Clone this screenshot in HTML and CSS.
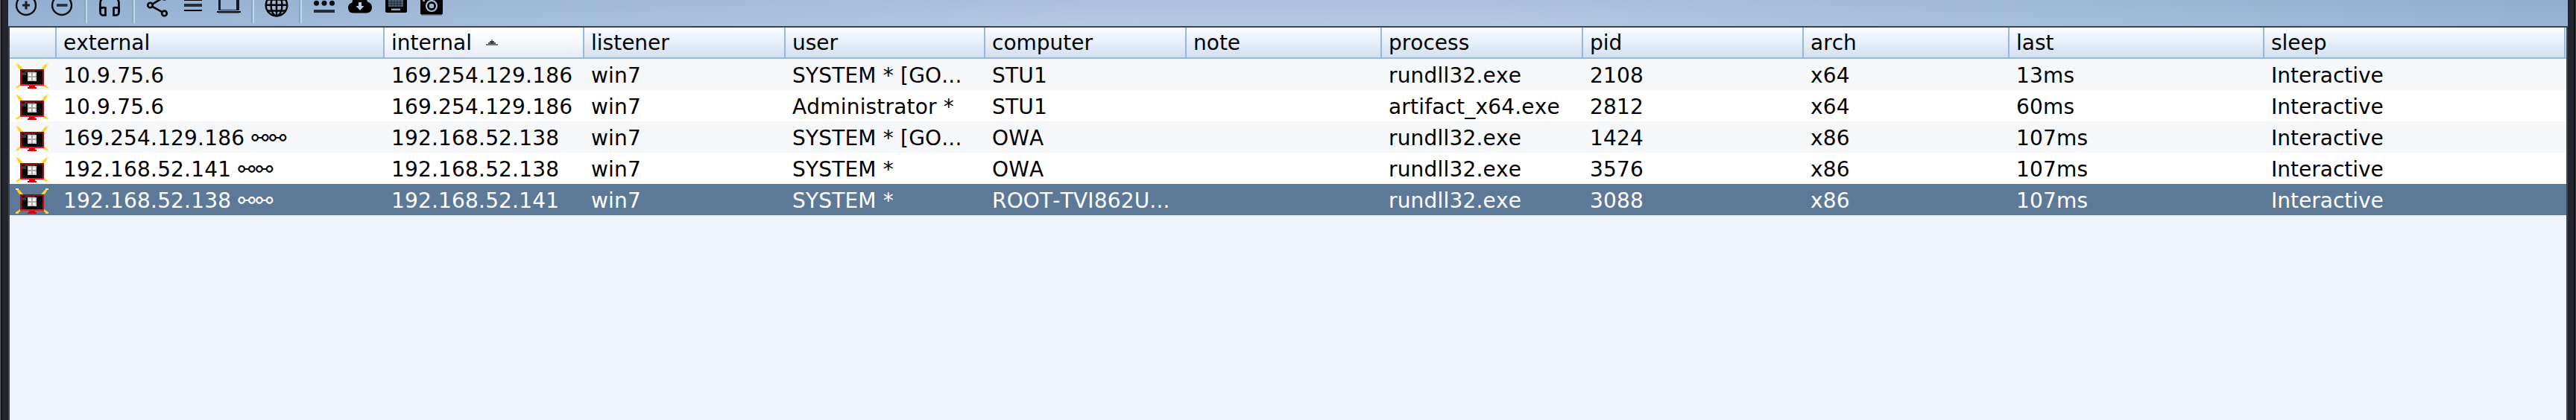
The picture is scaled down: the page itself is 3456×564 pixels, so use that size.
FILE: index.html
```
<!DOCTYPE html>
<html lang="en">
<head>
<meta charset="utf-8">
<title>Sessions</title>
<link rel="stylesheet" href="styles.css">
</head>
<body>
<svg class="defs" width="0" height="0" aria-hidden="true">
  <defs>
    <linearGradient id="glass" x1="0" y1="1" x2="1" y2="0">
      <stop offset="0" stop-color="#222"/><stop offset=".25" stop-color="#000"/><stop offset=".55" stop-color="#111"/><stop offset=".8" stop-color="#000"/>
    </linearGradient>
    <symbol id="host" viewBox="0 0 44 34">
      <path d="M1 1L5 2L10 8H5L3 5zM43 1L39 2L34 8H39L41 5z" fill="#ffd21c"/>
      <path d="M0 0h4v2H0zM40 0h4v2h-4z" fill="#ffe88a"/>
      <path d="M6 28v3l-3 2H0v-1zM38 28v3l3 2h3v-1z" fill="#ffd21c"/>
      <path d="M0 32h4v2H0zM40 32h4v2h-4z" fill="#ffe88a" opacity=".7"/>
      <path d="M6 8h32v22H6z" fill="#c40008"/>
      <path d="M6 8h32v2H6z" fill="#8e0a0c"/>
      <path d="M6 28h32v2H6z" fill="#f01418"/>
      <path d="M8 10h28v18H8z" fill="url(#glass)"/>
      <path d="M12 10h14v2H12zM8 12h6v4H8z" fill="#383838"/>
      <path d="M16 12h12v12H16z" fill="#d2d2d2"/>
      <path d="M18 14h3v3h-3zM23 14h3v3h-3zM18 19h3v3h-3zM23 19h3v3h-3z" fill="#fff"/>
      <path d="M21 12h2v12h-2zM16 17h12v2H16z" fill="#aaa"/>
      <path d="M18 30h8v2h-8z" fill="#d90008"/>
      <path d="M16 32h12v2H16z" fill="#b01018"/>
      <path d="M19 32h6v2h-6z" fill="#d90008"/>
    </symbol>
  </defs>
</svg>
<div class="window">
  <div class="edge edge-left"></div>
  <main class="panel">
    <nav class="toolbar">
      <svg class="tool" viewBox="-24 0 48 35"><g fill="none" stroke="#0b0f14" stroke-width="2.4"><circle cx="0" cy="7" r="13"/></g><path d="M-5 5.4H5v3.2H-5zM-1.6 1.5h3.2v11h-3.2z" fill="#1b222b"/></svg>
      <svg class="tool" viewBox="-24 0 48 35"><circle cx="0" cy="7" r="13" fill="none" stroke="#0b0f14" stroke-width="2.4"/><path d="M-7 5.2H7.500v3.600H-7z" fill="#252d38"/></svg>
      <i class="sep"></i>
      <svg class="tool" viewBox="-24 0 48 35"><g fill="none" stroke="#000" stroke-width="2.600"><path d="M-12.500 16V4Q-12-5 0-6Q12-5 12.500 4V16"/><path d="M-12.500 11q4-1.500 7-.500v10h-4q-3-1-3-4zM12.500 11q-4-1.500-7-.500v10h4q3-1 3-4z"/></g></svg>
      <i class="sep"></i>
      <svg class="tool" viewBox="-24 0 48 35"><g fill="none" stroke="#000" stroke-width="2.600"><circle cx="-9.500" cy="7" r="3.200"/><circle cx="9.500" cy="18" r="3.400"/><circle cx="9.500" cy="-4" r="3.400"/><path d="M-6.500 8.800L6.500 16.200M-6.500 5.400L6.500-2.200"/></g></svg>
      <svg class="tool" viewBox="-24 0 48 35"><path d="M-12 0h24v1h-24zM-12 13h24v2h-24z" fill="#000"/><path d="M-12 5h24v4h-24z" fill="#252d38"/></svg>
      <svg class="tool" viewBox="-24 0 48 35"><path d="M-14 0h3v13h21V0h4v14h-28z" fill="#161b22"/><path d="M-16 15h32v2h-32z" fill="#000"/><path d="M-14 17h28v1.500h-28z" fill="#7189a3"/></svg>
      <i class="sep"></i>
      <svg class="tool" viewBox="-24 0 48 35"><g fill="none" stroke="#000" stroke-width="2.400"><circle cx="0" cy="7" r="14.300"/><ellipse cx="0" cy="7" rx="7.500" ry="14.300"/><path d="M0-8v30M-14 6.800h28M-12 14.500h24M-12-.5h24"/></g></svg>
      <i class="sep"></i>
      <svg class="tool" viewBox="-24 0 48 35"><g fill="#0b0f14"><circle cx="-10.500" cy="4.300" r="3.500"/><circle cx="0" cy="4.300" r="3.500"/><circle cx="10.500" cy="4.300" r="3.500"/></g><path d="M-14 13h28v4h-28z" fill="#252d38"/></svg>
      <svg class="tool" viewBox="-24 0 48 35"><path d="M-9 17.500Q-16 17-16 10.500Q-16 5-10.500 3.500Q-10-5 0-5Q8-5 10 2.500Q16 4 16 10Q16 17 9 17.500z" fill="#000"/><path d="M-2 3h4v5h3.500L0 14-5.500 8H-2z" fill="#b9cde2"/></svg>
      <svg class="tool" viewBox="-24 0 48 35"><path d="M-14 0h29v15q0 2-2 2h-25q-2 0-2-2z" fill="#000"/><path d="M-10 0h20v9h-20z" fill="#52647a"/><path d="M-10 3h20M-10 6h20M-6 0v9M-2 0v9M2 0v9M6 0v9" stroke="#202832" stroke-width="1"/><path d="M-6 11.500H6v2.500H-6z" fill="#90a9c4"/></svg>
      <svg class="tool" viewBox="-24 0 48 35"><path d="M-15 0h30v19h-30z" fill="#000"/><path d="M-14 19h28v1.500h-28z" fill="#415062"/><circle cx="0" cy="8" r="7" fill="none" stroke="#a4bdd8" stroke-width="2.200"/><circle cx="0" cy="8" r="3.300" fill="#9cb6d2"/><path d="M-12 0h3v2h-3z" fill="#8aa4c0"/></svg>
    </nav>
    <section class="grid">
      <header class="row head">
        <div></div><div>external</div>
        <div class="sorted">internal<svg class="arrow" viewBox="0 0 16 8"><path d="M0 6h16v2H0z" fill="#777"/><path d="M3 4h10v2H3zM5 2h6v2H5z" fill="#555"/><path d="M7 0h2v2H7z" fill="#888"/><path d="M7 2h2v4H7z" fill="#333"/></svg></div>
        <div>listener</div><div>user</div><div>computer</div><div>note</div><div>process</div><div>pid</div><div>arch</div><div>last</div><div>sleep</div>
      </header>
      <div class="row"><div><svg class="host"><use href="#host"/></svg></div><div>10.9.75.6</div><div>169.254.129.186</div><div>win7</div><div>SYSTEM * [GO...</div><div>STU1</div><div></div><div>rundll32.exe</div><div>2108</div><div>x64</div><div>13ms</div><div>Interactive</div></div>
      <div class="row"><div><svg class="host"><use href="#host"/></svg></div><div>10.9.75.6</div><div>169.254.129.186</div><div>win7</div><div>Administrator *</div><div>STU1</div><div></div><div>artifact_x64.exe</div><div>2812</div><div>x64</div><div>60ms</div><div>Interactive</div></div>
      <div class="row"><div><svg class="host"><use href="#host"/></svg></div><div>169.254.129.186 ⚯⚯</div><div>192.168.52.138</div><div>win7</div><div>SYSTEM * [GO...</div><div>OWA</div><div></div><div>rundll32.exe</div><div>1424</div><div>x86</div><div>107ms</div><div>Interactive</div></div>
      <div class="row"><div><svg class="host"><use href="#host"/></svg></div><div>192.168.52.141 ⚯⚯</div><div>192.168.52.138</div><div>win7</div><div>SYSTEM *</div><div>OWA</div><div></div><div>rundll32.exe</div><div>3576</div><div>x86</div><div>107ms</div><div>Interactive</div></div>
      <div class="row selected"><div><svg class="host"><use href="#host"/></svg></div><div>192.168.52.138 ⚯⚯</div><div>192.168.52.141</div><div>win7</div><div>SYSTEM *</div><div>ROOT-TVI862U...</div><div></div><div>rundll32.exe</div><div>3088</div><div>x86</div><div>107ms</div><div>Interactive</div></div>
    </section>
  </main>
  <div class="edge edge-right"></div>
</div>
</body>
</html>
```
FILE: styles.css
```
* { box-sizing: border-box; }
body {
  margin: 0;
  font: 28px/32px "DejaVu Sans", sans-serif;
  font-kerning: none;
  color: #000;
  overflow: hidden;
}
.defs { position: absolute; }
.window { display: flex; height: 564px; }
.edge { flex: none; background: #23252f; }
.edge-left { width: 11px; border-left: 1px solid #5a5b5c; box-shadow: inset 2px 0 #101218; }
.edge-right { width: 11px; border-right: 1px solid #3c3d40; box-shadow: inset -2px 0 #101218; }
.panel { flex: 1; display: flex; flex-direction: column; min-width: 0; }
.toolbar {
  flex: none;
  display: flex;
  height: 35px;
  background:
    linear-gradient(to bottom, rgba(60, 90, 130, .08), rgba(60, 90, 130, 0)),
    linear-gradient(to right, #98b5d6, #b5cae3 42%, #b5cae3 58%, #98b5d6);
}
.tool { flex: none; width: 48px; height: 35px; }
.sep {
  flex: none;
  width: 4px;
  height: 31px;
  margin: 0 6px;
  background: linear-gradient(to right, #8aa5c4 50%, #c5d6e9 50%);
}
.grid {
  flex: 1;
  border: 2px solid #414245;
  border-bottom: 0;
  background: #eff3fb;
}
.row {
  display: grid;
  grid-template-columns: 63px 440px 268px 270px 268px 270px 262px 270px 296px 276px 342px 404px;
  height: 42px;
  background: #fff;
  letter-spacing: .18px;
}
.row > div { padding: 7px 0 0 9px; white-space: pre; overflow: hidden; }
.row > div:first-child { padding: 6px 0 0 8px; }
.row > div:last-child { letter-spacing: 0; }
.row:nth-child(even) { background: #f6f7f9; }
.head {
  background: linear-gradient(#fbfdff, #edf3fc 35%, #d2e0ee);
  border-bottom: 2px solid #9ab9d9;
  letter-spacing: 0;
}
.head > div { padding-top: 5px; border-right: 2px solid #9ab9d9; }
.head .sorted { background: linear-gradient(#fff, #f8fafd 40%, #e6edf7); }
.arrow { width: 16px; height: 8px; margin-left: 19px; vertical-align: 6px; }
.row.selected { background: #5d7998; color: #fff; }
.host { display: block; width: 44px; height: 34px; }
```
